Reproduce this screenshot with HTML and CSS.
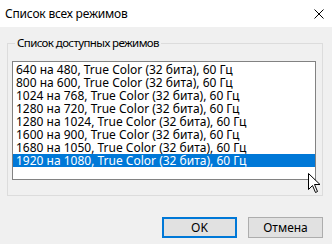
FILE: index.html
```html
<!DOCTYPE html>
<html lang="ru">
<head>
    <meta charset="UTF-8">
    <title>Список всех режимов</title>
    <link rel="stylesheet" href="styles.css">
</head>
<body>
    <div class="dialog">
        <div class="titlebar">
            <span class="title">Список всех режимов</span>
            <span class="close">
                <svg width="10" height="10" viewBox="0 0 10 10">
                    <path d="M0.5 0.5 L9.5 9.5 M9.5 0.5 L0.5 9.5" stroke="#000" stroke-width="1"/>
                </svg>
            </span>
        </div>

        <div class="content">
            <fieldset class="group">
                <legend>Список доступных режимов</legend>
                <ul class="listbox">
                    <li>640 на 480, True Color (32 бита), 60 Гц</li>
                    <li>800 на 600, True Color (32 бита), 60 Гц</li>
                    <li>1024 на 768, True Color (32 бита), 60 Гц</li>
                    <li>1280 на 720, True Color (32 бита), 60 Гц</li>
                    <li>1280 на 1024, True Color (32 бита), 60 Гц</li>
                    <li>1600 на 900, True Color (32 бита), 60 Гц</li>
                    <li>1680 на 1050, True Color (32 бита), 60 Гц</li>
                    <li class="selected">1920 на 1080, True Color (32 бита), 60 Гц</li>
                </ul>
            </fieldset>

            <div class="buttons">
                <button class="btn default">OK</button>
                <button class="btn">Отмена</button>
            </div>
        </div>

        <!-- mouse pointer over the list corner -->
        <svg class="pointer" width="13" height="20" viewBox="0 0 13 20">
            <path d="M0.5 0.5 L0.5 16.5 L4.5 12.5 L7.5 19.5 L9.5 18.5 L6.5 11.5 L12 11.5 Z" fill="#fff" stroke="#000" stroke-width="1"/>
        </svg>
    </div>
</body>
</html>
```

FILE: styles.css
```css
body {
    margin: 0;
    font-family: 'Noto Sans', 'Liberation Sans', sans-serif;
    font-size: 12px;
    color: #000;
    background: #f0f0f0;
}

.dialog {
    position: relative;
    width: 332px;
    height: 244px;
    overflow: hidden;
    background: #f0f0f0;
}

.titlebar {
    height: 27px;
    background: #fff;
    display: flex;
    align-items: center;
    justify-content: space-between;
    padding: 0 8px 0 5px;
}

.title {
    font-size: 12px;
    letter-spacing: -0.2px;
}

.close {
    display: flex;
    width: 10px;
    height: 10px;
}

.content {
    padding: 9px 9px 0 7px;
}

.group {
    margin: 0;
    padding: 11px 6px 15px 4px;
    border: 1px solid #dcdcdc;
}

.group legend {
    padding: 0 2px;
    margin-left: 3px;
    font-size: 11.5px;
    line-height: 14px;
    letter-spacing: -0.6px;
}

.listbox {
    list-style: none;
    margin: 0;
    padding: 1px 0 0 0;
    height: 119px;
    box-sizing: border-box;
    border: 1px solid #828282;
    background: #fff;
}

.listbox li {
    height: 13px;
    line-height: 13px;
    padding-left: 3px;
    white-space: nowrap;
}

.listbox li.selected {
    background: #0078d7;
    color: #fff;
}

.buttons {
    display: flex;
    justify-content: flex-end;
    gap: 11px;
    margin-top: 21px;
}

.btn {
    width: 75px;
    height: 21px;
    box-sizing: border-box;
    border: 1px solid #adadad;
    background: #e1e1e1;
    font-family: inherit;
    font-size: 12px;
    padding: 0;
}

.btn.default {
    border: 2px solid #0078d7;
}

.pointer {
    position: absolute;
    left: 308px;
    top: 173px;
}
```
